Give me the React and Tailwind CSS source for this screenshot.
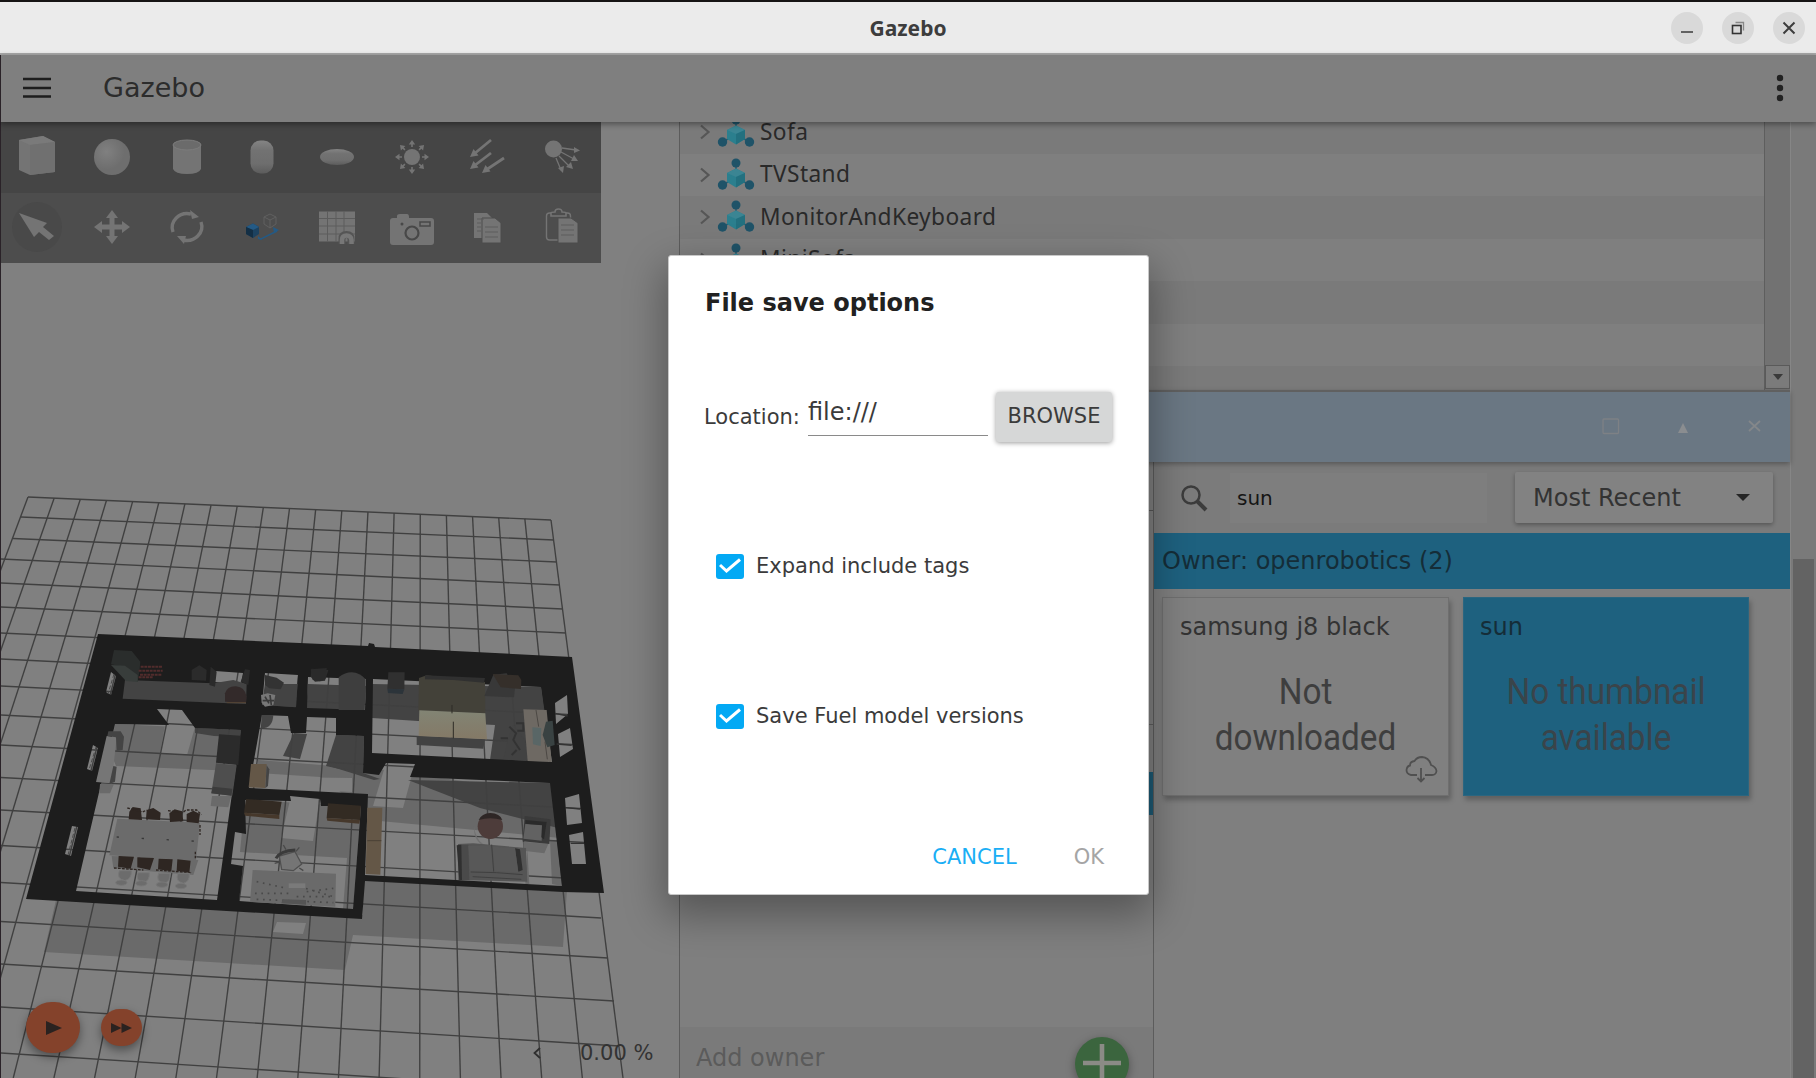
import React from "react";

const GRID_ROWS = [
  [28, 497, 551, 520], [21, 517, 554, 540], [13, 538.5, 557, 562], [0, 559, 560, 585], [0, 583, 563, 609],
  [0, 607, 566, 633], [0, 633, 570, 660], [0, 659, 574, 687], [0, 686, 578, 715], [0, 715, 582, 745],
  [0, 745, 586, 776], [0, 777.5, 590, 809], [0, 810, 594, 843], [0, 845.5, 598, 880], [0, 882.5, 601, 918],
  [0, 921.5, 608, 958], [0, 964, 614, 1001], [0, 1007, 619, 1046], [0, 1053, 625, 1093],
];
const GRID_COLS = Array.from({ length: 21 }, (_, i) => [28 + 26.15 * i, 497 + 1.15 * i, 623 - 40.65 * (20 - i)]);

function Scene() {
  return (
    <svg className="absolute inset-0" width="679" height="956" viewBox="1 122 679 956">
      {/* ground shadows */}
      <g fill="#6a6a6a">
        <path d="M56 900L363 915V880L567 890 563 947 353 935 345 970 44 952Z" />
      </g>
      <g fill="#808080">
        <path d="M277 922L306 923 303 934 273 932Z" />
      </g>
      {/* floor shadows */}
      <g fill="#696969">
        <path d="M115 724L241 730 236 771 116 766 110 751Z" />
        <path d="M258 760L385 770 560 795 560 838 380 821 320 777 258 773Z" />
        <path d="M245 800L361 806 353 909 343 909 347 858 240 852Z" />
        <path d="M550 840L558 840 562 886 552 884Z" />
      </g>
      <g fill="#808080">
        <path d="M168 709L195 727 187 755 160 753Z" />
        <path d="M291 796L320 799 313 841 281 838Z" />
        <path d="M386 763L415 764 403 808 373 806Z" />
        <path d="M270 777L352 778 352 792 270 788Z" />
      </g>
      <g fill="#434343">
        <path d="M195 728L241 730 240 737 214 736 195 733Z" />
        <path d="M336 735L364 736 363 774 326 766Z" />
        <path d="M294 733L307 734 300 759 283 756Z" />
        <path d="M408 780L552 783 558 828 480 808Z" />
        <path d="M326 765L363 773 380 779 374 780Z" />
        <path d="M372 684L541 687 548 735 548 765 490 760 495 725 418 721 372 718Z" />
        <path d="M308 684L366 686 364 712 306 710Z" />
        <path d="M265 683L298 685 296 708 262 706Z" />
      </g>
      {/* ground grid */}
      <g stroke="#404040" strokeWidth="1.4" fill="none">
        {GRID_ROWS.map((r, i) => <line key={i} x1={r[0]} y1={r[1]} x2={r[2]} y2={r[3]} />)}
        {GRID_COLS.map((c, i) => <line key={i} x1={c[0]} y1={c[1]} x2={c[2]} y2={1078} />)}
      </g>
      {/* walls with openings for the rooms */}
      <path
        fill="#1d1d1d"
        fillRule="evenodd"
        d="M98 634L368 646 369 643 374 644 375 647 572 657 604 893 563 892 365 881 362 919 26 899Z
           M115 724L169 725 157 709 182 710 195 728 241 730 217 900 76 891Z
           M262 715L288 716 291 733 306 733 307 717 336 718 336 735 364 736 363 773 379 775 386 763 415 764 410 777 458 779 550 783 562 886 365 875 368 794 249 788Z
           M245 800L291 801 290 796 320 799 321 806 361 806 353 909 239 901 243 866 231 864 235 832 246 834Z
           M373 679L541 687 552 762 372 753Z
           M308 677L366 679 365 710 307 708Z
           M265 673L298 675 296 707 262 705Z
           M215 671L243 673 241 684 214 682Z
           M555 703L567 695 568 714 556 724Z M558 734L570 728 573 749 560 757Z
           M565 798L579 794 582 823 567 825Z M569 835L583 832 586 864 572 864Z
           M111 672L116 676 111 695 106 692Z M93 745L98 748 92 771 87 769Z M72 826L78 827 71 856 65 854Z"
      />
      {/* kitchen */}
      <g transform="translate(0 480) scale(.33333)">
        <path fill="#434343" d="M375 600L640 610 700 600 740 612 738 672 368 656Z" />
        <path fill="#2a2d2c" d="M342 510L395 513 421 545 418 575 413 606 370 560 333 553Z" />
        <path fill="#383d3b" d="M333 555L375 557 413 585 413 606 378 603Z" />
        <path fill="none" stroke="#512c2c" strokeWidth="6" strokeDasharray="9 2" d="M422 560h66M416 572h72M420 584h66M416 592h44" />
        <path fill="#2b2b2b" d="M575 570L598 556 620 570 618 602 575 600ZM632 560L650 575 645 620 628 615ZM735 568L750 570 745 615 722 605Z" />
        <path fill="#332a2a" d="M675 640Q682 618 708 619 735 621 740 650L738 668 675 665Z" />
        <path stroke="#543" strokeWidth="3" d="M680 668H738" />
        <path fill="#434343" d="M795 612L893 612 887 682 797 676Z" />
        <path fill="#333" d="M795 585L830 593 852 608 842 628 808 625 795 615Z" />
        <path fill="#2d2d2d" d="M935 566L985 570 975 602 945 605 932 590Z" />
        <path fill="#777" d="M783 645L803 640 826 645 820 675 795 680 785 668Z" />
        <path fill="none" stroke="#3a3a3a" strokeWidth="5" d="M795 650l12 20M810 645l4 30M788 662h34" />
        <path fill="#444" d="M785 705H820Q818 745 785 745Z" />
      </g>
      {/* bathroom and bedroom */}
      <g transform="translate(300 480) scale(.33333)">
        <defs>
          <linearGradient id="duvet" x2="0" y2="1"><stop offset="0" stopColor="#828474" /><stop offset="1" stopColor="#847966" /></linearGradient>
        </defs>
        <path fill="#3e3e3e" d="M116 690V592Q135 577 155 577 180 578 197 598L194 690Z" />
        <path fill="#2a2a2a" d="M32 568L80 564 78 595 60 604 38 600Z" />
        <path fill="#303030" d="M265 577L314 577 313 628 262 626Z" />
        <path fill="#2c343a" d="M262 626L313 628 308 642 264 639Z" />
        <path fill="#434139" d="M357 594L380 586 555 606 556 700 355 692Z" />
        <path fill="#303030" d="M375 586L555 594 552 608 460 600 375 598Z" />
        <path fill="#424242" d="M350 768L555 778 550 806 350 795Z" />
        <path fill="url(#duvet)" d="M358 691L556 700 561 778 356 768Z" />
        <path stroke="#2e2c26" strokeWidth="3" d="M456 675V700M460 725V775" />
        <path fill="#383838" d="M580 584L620 580 645 625 642 652 553 648Z" />
        <path fill="#352f2a" d="M578 582L655 586 664 600 663 627 602 622Z" />
        <path fill="#424242" d="M640 735L675 780 680 843 610 838 625 775Z" />
        <path fill="none" stroke="#333" strokeWidth="6" d="M628 740l20 20-8 20 20 30M648 730h22v22h-18M635 825l15-15M602 775h22" />
        <path fill="#6e6963" d="M670 688L740 690 755 846 683 843Z" />
        <path stroke="#4b4743" strokeWidth="3" d="M708 690L716 740M735 785L742 838" />
        <path fill="#596666" d="M697 742L724 744 722 798 699 793Z" />
        <path fill="#394242" d="M738 725L758 722 764 795 742 802 728 765Z" />
        <path stroke="#333" strokeWidth="4" fill="none" d="M765 700L803 708M770 792L815 796" />
      </g>
      {/* living room and study, left part */}
      <g transform="translate(0 700) scale(.33333)">
        <path fill="#767676" d="M320 108L350 112 335 250 288 246Z" />
        <path fill="#444" d="M325 94H362L372 110 368 150 350 152 348 112 322 108ZM340 198L350 200 345 245 328 252Z" />
        <path fill="#6a6a6a" d="M300 252H342L330 280H298Z" />
        <path fill="#2b2b2b" d="M657 103L722 107 715 195 648 188Z" />
        <path fill="#4e4e4e" d="M648 190L710 196 697 287 634 280Z" />
        <path fill="#3c3c3c" d="M638 260L697 266 694 287 634 280Z" />
        <path fill="#6a6a6a" d="M636 288H694L685 322 632 318Z" />
        <path fill="#6a6a6a" d="M335 468L595 480 580 525 340 505Z" />
        <path fill="#6b6b6b" d="M352 356L600 368 588 482 328 466Z" />
        <path stroke="#383838" strokeWidth="4" strokeDasharray="7 68" d="M350 411L592 424" />
        <g fill="#2e2622">
          <path d="M388 335l10-14 24 4 4 35-40-2ZM440 330l20-6 22 14-2 22-42-2ZM508 340l16-12 22 6 4 30-40 2ZM560 342l20-10 20 10-4 28-36-4Z" />
          <path d="M356 468l46 2-10 36-38-6ZM412 472l50 2-12 36-38-8ZM476 476l42 2-4 36-40-6ZM532 478l40 4-4 36-38-6Z" />
        </g>
        <path fill="none" stroke="#2e2622" strokeWidth="4" strokeDasharray="8 4" d="M382 324l46 12 12-6M504 332l44 6 10-8h32l14 14M342 504l88 6M468 510l108 8M600 375v30M586 455v20" />
        <g fill="#6c6c6c" stroke="#777" strokeWidth="3">
          <path d="M358 512h36q2 25-20 30-26-6-16-30ZM414 518h34q2 25-18 30-26-6-16-30ZM476 520h34q2 25-18 30-26-6-16-30ZM534 520h34q2 25-18 30-26-6-16-30Z" />
          <ellipse cx="364" cy="548" rx="17" ry="8" /><ellipse cx="424" cy="550" rx="17" ry="8" /><ellipse cx="486" cy="554" rx="17" ry="8" /><ellipse cx="543" cy="558" rx="17" ry="8" />
        </g>
        <path fill="#645747" d="M753 192L800 192 796 264 746 262Z" />
        <path fill="#444" d="M800 196l8 12-4 50-8 6Z" />
        <path fill="#332b23" d="M738 297L845 305 838 345 732 338Z" />
        <path fill="#46382b" d="M732 338L838 345V357L782 352 735 347Z" />
        <path fill="#6a6a6a" d="M758 510L1008 521 1006 620 750 606Z" />
        <path fill="none" stroke="#4a4a4a" strokeWidth="5" strokeDasharray="5 14" d="M770 545l90 20M765 580h100M900 560l100 30M890 590h110M920 575l80-10M770 598l230 10" />
        <path fill="#7a7a7a" d="M866 550h50v14h-50Z" />
        <path fill="#555" d="M848 598l70 2v14l-74-4Z" />
        <path fill="#757575" stroke="#505050" strokeWidth="4" d="M838 468L885 455 905 492 880 512 845 508Z" />
        <path fill="none" stroke="#3b3b3b" strokeWidth="9" d="M828 475Q840 452 886 450" />
        <path fill="none" stroke="#4a4a4a" strokeWidth="4" d="M850 435l8 14M898 442l-10 12M824 490l14-4M910 512l-12-8" />
      </g>
      {/* study and living room, right part */}
      <g transform="translate(300 700) scale(.33333)">
        <path fill="#332b23" d="M84 310L183 317 180 360 80 354Z" />
        <path fill="#46382b" d="M80 354L180 360 178 371 82 362Z" />
        <path fill="#645747" d="M202 323H247L241 524 197 522Z" />
        <path stroke="#4a4036" strokeWidth="3" d="M202 422H244" />
        <path fill="#707070" d="M522 380q8 50 40 56l-6 4q-36-16-34-60Z" />
        <ellipse cx="571" cy="379" rx="38" ry="38" fill="#4d3c3a" />
        <path fill="#2e2625" d="M536 360Q545 340 571 339 600 340 607 360Q570 350 536 360Z" />
        <path fill="#6a6a6a" d="M670 425L745 432 733 460 670 452ZM682 445L688 552 676 552Z" />
        <path fill="#3a3a3a" d="M674 348L752 358 748 432 668 424Z" />
        <path fill="#626262" d="M676 372L728 375 725 422 670 416Z" />
        <path fill="#2a2a2a" d="M676 360L740 366 732 418 724 412 726 376 676 371Z" />
        <path fill="#555" d="M474 432L520 430 678 444 682 545 476 540Z" />
        <path fill="#4a4a4a" d="M474 436L505 434 508 540 476 540Z" />
        <path fill="#303030" d="M470 436L484 434 486 540 478 540ZM645 445L660 448 668 510 655 515Z" />
        <path fill="#585858" d="M505 438L572 436 580 512 510 512ZM578 440L645 444 655 518 584 512Z" />
        <path fill="none" stroke="#404040" strokeWidth="3" d="M575 434L581 515M512 516L590 518 668 524M518 530L664 538" />
        <path stroke="#333" strokeWidth="4" d="M797 323L840 327M812 430L852 430" />
      </g>
      {/* window frames in the left wall */}
      <g stroke="#4a4a4a" strokeWidth="1" strokeDasharray="4 2">
        <path d="M114 674L108 694M96 747L89 770M75 828L68 855" />
      </g>
    </svg>
  );
}

const C = "#747474";
function Tool({ children }) {
  return (
    <div className="flex h-full items-center justify-center pr-[3px]">
      <svg width="46" height="46" viewBox="-23 -23 46 46" fill={C}>{children}</svg>
    </div>
  );
}

function Toolbar() {
  return (
    <div className="relative w-[600px] overflow-hidden">
      <div className="grid h-[71px] w-[600px] grid-cols-[repeat(8,75px)] bg-[#454545] pb-[2px]">
        <Tool>
          <path d="M-18 -14L6 -18 18 -12V18L-7 21 -18 16Z" transform="translate(0 -3)" />
          <path d="M-18 -17L6 -21 18 -15 -7 -12Z" fill="#7a7a7a" />
          <path d="M-7 -12L18 -15V15L-7 18Z" fill="#707070" />
        </Tool>
        <Tool>
          <defs><radialGradient id="ball" cx=".35" cy=".35"><stop offset="0" stopColor="#808080" /><stop offset="1" stopColor="#6e6e6e" /></radialGradient></defs>
          <circle r="18" fill="url(#ball)" />
        </Tool>
        <Tool>
          <path d="M-14 -12V12Q-12 17 0 17T14 12V-12Z" />
          <ellipse cy="-12" rx="14" ry="5" fill="#6b6b6b" stroke="#7c7c7c" />
        </Tool>
        <Tool>
          <defs><linearGradient id="cap" x2="0" y2="1"><stop offset="0" stopColor="#848484" /><stop offset=".3" stopColor="#727272" /><stop offset=".7" stopColor="#6e6e6e" /><stop offset="1" stopColor="#5c5c5c" /></linearGradient></defs>
          <rect x="-11.5" y="-16.5" width="23" height="33" rx="10" fill="url(#cap)" />
        </Tool>
        <Tool>
          <ellipse rx="17" ry="8" fill="url(#cap)" />
        </Tool>
        <Tool>
          <circle r="8" />
          {[0, 45, 90, 135, 180, 225, 270, 315].map((a) => (
            <path key={a} transform={`rotate(${a})`} d="M-0.8 -10H.8V-12.5H3.2L0 -17 -3.2 -12.5H-.8Z" />
          ))}
        </Tool>
        <Tool>
          {[[4, -17, -17, 0], [4, -4, -17, 12], [17, 1, -5, 16]].map((p, i) => (
            <g key={i}>
              <path d={`M${p[0]} ${p[1]}L${p[2] + 4} ${p[3] - 3}`} stroke={C} strokeWidth="2.8" />
              <path d={`M${p[2]} ${p[3]}l3.500 -8 5 6.500Z`} />
            </g>
          ))}
        </Tool>
        <Tool>
          <circle cx="-8.500" cy="-8" r="8.500" />
          <path fill="none" stroke={C} strokeWidth="1.3" d="M0 -9L14 -7M-1 -5L12 2M-3 -1L8 10M-6 1L-1 13" />
          <path d="M12 -10L18 -6.500 12 -4ZM12 -2L16 4 9 4ZM9 5L11 12 4 10ZM-4 11L2 9 1 16Z" />
        </Tool>
      </div>
      <div className="grid h-[70px] w-[600px] grid-cols-[repeat(8,75px)] bg-[#4d4d4d] pb-[3px]">
        <div className="flex items-center justify-center pr-[3px]">
          <div className="flex size-[50px] items-center justify-center rounded-full bg-[#494949]">
            <svg width="46" height="46" viewBox="-23 -23 46 46" fill={C}>
              <path d="M-18 -14L10 -4 6 0 17 9 12 13 2 5 -3 10Z" />
            </svg>
          </div>
        </div>
        <Tool><path d="M0 -17L6 -9H2.500V-2.500H10V-6L18 0 10 6V2.500H2.500V9H6L0 17 -6 9H-2.500V2.500H-10V6L-18 0 -10 -6V-2.500H-2.500V-9H-6Z" /></Tool>
        <Tool>
          <path fill="none" stroke={C} strokeWidth="3.400" d="M-14 5A15 14 0 0 1 4 -13M14 -5A15 14 0 0 1 -4 13" />
          <path d="M3 -17L12 -10 5 -8ZM-3 17L-10 9 -1 9Z" />
        </Tool>
        <Tool>
          <path fill="#1c4260" d="M-16 0L-9 -3.500 -3 0V7L-9 11 -16 7Z" />
          <path fill="#245a85" d="M-16 0L-9 -3.500 -3 0 -9 3Z" />
          <path fill="#132f45" d="M-16 0L-9 3V11L-16 7Z" />
          <path fill="none" stroke="#245a85" strokeWidth="1.500" d="M-4 11L-1 12 15 4" />
          <path fill="#245a85" d="M11 0L17 3 12 6ZM-4 9L0 13 -4 12Z" />
          <path fill="none" stroke="#606060" strokeWidth="1" d="M2 -10L8 -13 14 -10V-3L8 1 2 -3ZM2 -10L8 -7 14 -10M8 -7V1" />
        </Tool>
        <Tool>
          <rect x="-18" y="-15.500" width="36" height="30" />
          <path stroke="#5c5c5c" strokeWidth="1" d="M-18 -8.500H18M-18 -1H18M-18 7H18M-9.500 -16V14.500M-1 -16V14.500M7 -16V14.500" />
          <path fill="none" stroke="#555" strokeWidth="7" d="M5 17V12Q5 7.500 9.500 7.500T14 12V17" />
          <path fill="none" stroke="#777" strokeWidth="4.500" d="M5 17V13Q5 8.500 9.500 8.500T14.500 13V17" />
        </Tool>
        <Tool>
          <g transform="translate(0 1)">
            <path d="M-22 -7Q-22 -10 -19 -10H-15V-12Q-15 -14 -12 -14H-5Q-3 -14 -3 -11V-10H19Q22 -10 22 -7V14Q22 17 19 17H-19Q-22 17 -22 14Z" />
            <circle cy="5" r="6.500" fill="none" stroke="#484848" strokeWidth="2.200" />
            <circle cx="-10" cy="-4" r="1.500" fill="#484848" />
            <rect x="8" y="-6" width="10" height="4" fill="none" stroke="#484848" strokeWidth="1.500" />
          </g>
        </Tool>
        <Tool>
          <path d="M-13 -14H0L5 -9V11H-13Z" />
          <path d="M-5 -9H8L14 -4V16H-5Z" stroke="#4d4d4d" />
          <path stroke="#5c5c5c" d="M-10 -8H-3M-10 -4H-6M-10 0H-6M-10 4H-6M-2 0H11M-2 5H11M-2 10H11" />
        </Tool>
        <Tool>
          <rect x="-15.500" y="-14" width="24" height="27" rx="3" fill="none" stroke={C} strokeWidth="1.400" />
          <path fill="#4d4d4d" stroke={C} strokeWidth="1.600" d="M-11 -11V-14Q-11 -15 -7 -15 -7 -18 -3.500 -18T0 -15Q4 -15 4 -14V-11Z" />
          <path d="M-4 -9H9L16 -4V16H-4Z" stroke="#4d4d4d" />
          <path stroke="#5c5c5c" d="M-1 -2H12M-1 3H12M-1 8H12" />
        </Tool>
      </div>
    </div>
  );
}

function TreeRow({ name, shade }) {
  return (
    <div className={`flex h-[42.5px] shrink-0 items-center pl-[19px] ${shade ? "bg-[#7a7a7a]" : "bg-[#7f7f7f]"}`}>
      {name && (
        <>
          <svg width="12" height="16" viewBox="0 0 12 16" fill="none" stroke="#565656" strokeWidth="2.200"><path d="M2 1.500L9.500 8 2 14.500" /></svg>
          <svg className="ml-[6px] shrink-0" width="38" height="34" viewBox="0 0 38 34">
            <path stroke="#2b5b70" strokeWidth="1.500" d="M19 4V14M6 27L14 22M32 27L24 22" />
            <g fill="#1f5368"><circle cx="19" cy="5" r="4.500" /><circle cx="5.500" cy="27" r="4.700" /><circle cx="32.500" cy="27" r="4.700" /></g>
            <path fill="#2b7f8e" d="M10 15L19 10.500 28 15V24L19 29.500 10 24Z" />
            <path fill="#3b8593" d="M10 15L19 10.500 28 15 19 19Z" />
            <path fill="#23707f" d="M19 19L28 15V24L19 29.500Z" />
          </svg>
          <span className='ml-[5px] pb-[1px] font-["Noto_Sans"] text-[22.7px] leading-[18px] tracking-[.4px] text-[#292929]'>{name}</span>
        </>
      )}
    </div>
  );
}

function EntityTree() {
  return (
    <div className="flex h-[268px] border-l border-[#5c5c5c]">
      <div className="flex min-w-0 flex-1 flex-col overflow-hidden">
        <div className="-mt-[11px]"><TreeRow name="Sofa" shade /></div>
        <TreeRow name="TVStand" />
        <TreeRow name="MonitorAndKeyboard" shade />
        <TreeRow name="MiniSofa" />
        <TreeRow shade />
        <TreeRow />
        <TreeRow shade />
      </div>
      <div className="flex w-[26px] flex-col justify-end border-l border-[#5e5e5e] bg-[#727272] pb-[1px]">
        <div className="flex h-[24px] items-center justify-center border border-[#5a5a5a] bg-[#7b7b7b]">
          <svg width="12" height="8" viewBox="0 0 12 8"><path d="M1 1H11L6 7Z" fill="#3a3a3a" /></svg>
        </div>
      </div>
    </div>
  );
}

function FuelPanel() {
  return (
    <div className="flex min-h-0 flex-1 flex-col">
      <div className="z-10 flex h-[72px] items-center justify-end border-t-2 border-[#606060] bg-[#6a7783] pr-[28px] shadow-[0_2px_5px_rgba(0,0,0,.3)]">
        <svg width="160" height="24" viewBox="0 0 160 24">
          <rect x="1" y="4" width="15.500" height="14.500" rx="1" fill="none" stroke="#7e8185" strokeWidth="1.300" />
          <path d="M76 18H86L81 8Z" fill="#8a8d90" />
          <path d="M147 6L158 16M158 6L147 16" stroke="#84878a" strokeWidth="1.800" />
        </svg>
      </div>
      <div className="flex min-h-0 flex-1">
        <div className="flex w-[475px] flex-col border-x border-[#5c5c5c] bg-[#7f7f7f]">
          <div className="h-[49px] border-b border-[#565656]" />
          <div className="h-[214px] border-b border-[#5e5e5e]" />
          <div className="h-[47px]" />
          <div className="h-[43px] bg-[#1d5a75]" />
          <div className="flex-1" />
          <div className="flex h-[51px] items-start justify-between overflow-hidden bg-[#7a7a7a] pl-[16px] pr-[24px]">
            <span className="pt-[15px] font-['DejaVu_Sans'] text-[24px] leading-[32px] text-[#5b5b5b]">Add owner</span>
            <div className="mt-[10px] flex size-[54px] shrink-0 items-center justify-center rounded-full bg-[#3b653e] shadow-[0_3px_10px_rgba(0,0,0,.35)]">
              <svg width="40" height="40" viewBox="0 0 40 40"><path d="M20 0V40M1 19H39" stroke="#8b8b86" strokeWidth="4.600" /></svg>
            </div>
          </div>
        </div>
        <div className="flex flex-1 flex-col bg-[#7f7f7f]">
          <div className="flex h-[71px] items-center bg-[#7b7b7b]">
            <svg className="ml-[26px]" width="28" height="28" viewBox="0 0 28 28" fill="none" stroke="#3c3c3c"><circle cx="11" cy="11" r="8.500" strokeWidth="2.500" /><path d="M17 17L26 26" strokeWidth="4" /></svg>
            <div className="ml-[22px] flex h-[50px] w-[257px] items-center bg-[#7e7e7e] pl-[7px] font-['DejaVu_Sans'] text-[20px] text-[#151515]">sun</div>
            <div className="ml-[28px] flex h-[51px] w-[258px] items-center justify-between rounded-[2px] bg-[#828282] pl-[18px] pr-[22px] shadow-[0_2px_4px_rgba(0,0,0,.3)]">
              <span className="font-['DejaVu_Sans'] text-[24px] text-[#333]">Most Recent</span>
              <svg width="16" height="9" viewBox="0 0 16 9"><path d="M1 1H15L8 8Z" fill="#252525" /></svg>
            </div>
          </div>
          <div className="flex h-[56px] items-center bg-[#1e617f] pb-[1px] pl-[8px] font-['DejaVu_Sans'] text-[24px] text-[#152d38]">Owner: openrobotics (2)</div>
          <div className="flex gap-[14px] pl-[8px] pt-[8px]">
            <div className="flex h-[199px] w-[287px] flex-col border border-[#6f6f6f] bg-[#808080] pt-[12px] shadow-[2px_4px_5px_rgba(0,0,0,.25)]">
              <span className="pl-[17px] font-['DejaVu_Sans'] text-[24px] leading-[34px] text-[#333]">samsung j8 black</span>
              <div className="mt-[25px] text-center font-['Roboto'] text-[36px] leading-[46px] text-[#3e3e3e]">
                <div className="scale-x-[.925]">Not</div>
                <div className="scale-x-[.925]">downloaded</div>
              </div>
              <svg className="-mt-[5px] ml-[242px]" width="33" height="28" viewBox="0 0 33 28" fill="none" stroke="#505050" strokeWidth="1.800">
                <path d="M12 19H6Q1.500 18 1.500 14 2 10 5 9.500 5 5.500 9.500 5 12 1 17 1 24 1.500 26 9 31 11 31.500 15 31 19 27 19H20M16 12V25M12.500 22L16 25.500 19.500 22" />
              </svg>
            </div>
            <div className="flex h-[199px] w-[286px] flex-col border border-[#2b6680] bg-[#1e617f] pt-[12px] shadow-[2px_4px_5px_rgba(0,0,0,.25)]">
              <span className="pl-[16px] font-['DejaVu_Sans'] text-[24px] leading-[34px] text-[#152d38]">sun</span>
              <div className="mt-[25px] text-center font-['Roboto'] text-[36px] leading-[46px] text-[#3a444a]">
                <div className="scale-x-[.925] whitespace-nowrap">No thumbnail</div>
                <div className="scale-x-[.925]">available</div>
              </div>
            </div>
          </div>
        </div>
      </div>
    </div>
  );
}

function CheckRow({ label }) {
  return (
    <div className="flex items-center gap-[12px] pl-[12px]">
      <div className="flex h-[25px] w-[28px] items-center justify-center rounded-[3px] bg-[#03a9f4]">
        <svg width="22" height="16" viewBox="0 0 22 16" fill="none" stroke="#fff" strokeWidth="3"><path d="M1 7L7.500 13 21 1.500" /></svg>
      </div>
      <span className="font-['DejaVu_Sans'] text-[21px] leading-[26px] text-[#3b3b3b]">{label}</span>
    </div>
  );
}

function SaveDialog() {
  return (
    <div className="absolute left-[668px] top-[255px] z-30 flex h-[640px] w-[481px] flex-col rounded-[3px] border border-[#c8c8c8] bg-white px-[35px] font-['DejaVu_Sans'] shadow-[0_16px_40px_4px_rgba(0,0,0,.33)]">
      <h2 className="mt-[31px] pl-px text-[24px] font-bold leading-[32px] text-[#212121]">File save options</h2>
      <div className="mt-[73px] flex items-start">
        <span className="mt-[-1px] w-[104px] pt-[10px] text-[21px] leading-[32px] text-[#3b3b3b]">Location:</span>
        <div className="h-[44px] w-[180px] border-b border-[#8a8a8a] text-[24px] leading-[40px] text-[#3b3b3b]">file:///</div>
        <div className="ml-[8px] flex h-[50px] w-[116px] shrink-0 items-center justify-center rounded-[3px] bg-[#d6d7d7] pb-[1px] text-[21px] text-[#3b3b3b] shadow-[0_1px_5px_rgba(0,0,0,.4)]">BROWSE</div>
      </div>
      <div className="mt-[111px]"><CheckRow label="Expand include tags" /></div>
      <div className="mt-[124px]"><CheckRow label="Save Fuel model versions" /></div>
      <div className="mt-[114px] flex justify-end pr-[9px] text-[21px] leading-[28px]">
        <span className="mr-[57px] text-[#1aaef5]">CANCEL</span>
        <span className="text-[#a5a5a5]">OK</span>
      </div>
    </div>
  );
}

function TitleBar() {
  return (
    <div className="grid h-[55px] grid-cols-3 items-center border-b-2 border-t-2 border-b-[#a9a9a9] border-t-[#161414] bg-[#ebebeb]">
      <div />
      <div className="pt-[1px] text-center font-['Noto_Sans'] text-[21px] font-bold leading-[30px] text-[#3d3d3d]">Gazebo</div>
      <div className="flex justify-end gap-[19px] pr-[11px]">
        <div className="flex size-8 items-center justify-center rounded-full bg-[#d9d9d9]">
          <svg width="16" height="16" viewBox="0 0 16 16"><path d="M2 12H14" stroke="#444" strokeWidth="1.600" /></svg>
        </div>
        <div className="flex size-8 items-center justify-center rounded-full bg-[#d9d9d9]">
          <svg width="16" height="16" viewBox="0 0 16 16" fill="none"><path d="M5.500 2.500H13.500V10.500" stroke="#888" strokeWidth="1.300" /><rect x="2.500" y="5.500" width="8.500" height="8" stroke="#333" strokeWidth="1.600" /></svg>
        </div>
        <div className="flex size-8 items-center justify-center rounded-full bg-[#d9d9d9]">
          <svg width="16" height="16" viewBox="0 0 16 16"><path d="M2.500 2.500L13.500 13.500M13.500 2.500L2.500 13.500" stroke="#3d3d3d" strokeWidth="2" /></svg>
        </div>
      </div>
    </div>
  );
}

export default function App() {
  return (
    <div className="relative flex h-[1078px] w-[1816px] flex-col overflow-hidden bg-[#808080]">
      <TitleBar />
      <div className="z-20 flex h-[67px] items-center border-l border-[#2a2228] bg-[#7f7f7f] pb-[1px] shadow-[0_2px_6px_rgba(0,0,0,.4)]">
        <svg className="ml-[22px]" width="28" height="22" viewBox="0 0 28 22"><path d="M0 2H28M0 11H28M0 19.500H28" stroke="#1e1e1e" strokeWidth="2.600" /></svg>
        <span className="ml-[52px] font-['DejaVu_Sans'] text-[27px] leading-[34px] text-[#2c2c2c]">Gazebo</span>
        <svg className="ml-auto mr-[32px]" width="8" height="28" viewBox="0 0 8 28" fill="#222"><circle cx="4" cy="4" r="3.200" /><circle cx="4" cy="14" r="3.200" /><circle cx="4" cy="24" r="3.200" /></svg>
      </div>
      <div className="flex min-h-0 flex-1">
        <div className="relative flex w-[679px] flex-col justify-between border-l border-[#2a2228]">
          <Scene />
          <Toolbar />
          <div className="relative flex h-[76px] items-start pl-[25px]">
            <div className="flex h-[51px] w-[54px] items-center justify-center rounded-full bg-[#84422b] pl-[2px] shadow-[0_4px_10px_rgba(0,0,0,.4)]">
              <svg width="16" height="14" viewBox="0 0 16 14"><path d="M0 0L16 7 0 14Z" fill="#2a2220" /></svg>
            </div>
            <div className="ml-[21px] mt-[7px] flex h-[37px] w-[41px] items-center justify-center rounded-full bg-[#84422b] shadow-[0_4px_10px_rgba(0,0,0,.4)]">
              <svg width="21" height="10" viewBox="0 0 21 10"><path d="M0 0L10.500 5 0 10ZM10.500 0L21 5 10.500 10Z" fill="#2a2220" /></svg>
            </div>
            <svg className="ml-[391px] mt-[45px]" width="8" height="12" viewBox="0 0 8 12" fill="none" stroke="#2e2e2e" strokeWidth="1.800"><path d="M7 1L1.500 6 7 11" /></svg>
            <span className="ml-[39px] mt-[35px] whitespace-nowrap font-['DejaVu_Sans'] text-[21px] leading-[32px] text-[#333]">0.00 %</span>
          </div>
        </div>
        <div className="flex w-[1111px] flex-col">
          <EntityTree />
          <FuelPanel />
        </div>
        <div className="flex w-[26px] flex-col items-center border-l border-[#868686] bg-[#7a7a7a] pt-[437px]">
          <div className="w-[21px] flex-1 bg-[#636363]" />
        </div>
      </div>
      <SaveDialog />
    </div>
  );
}
